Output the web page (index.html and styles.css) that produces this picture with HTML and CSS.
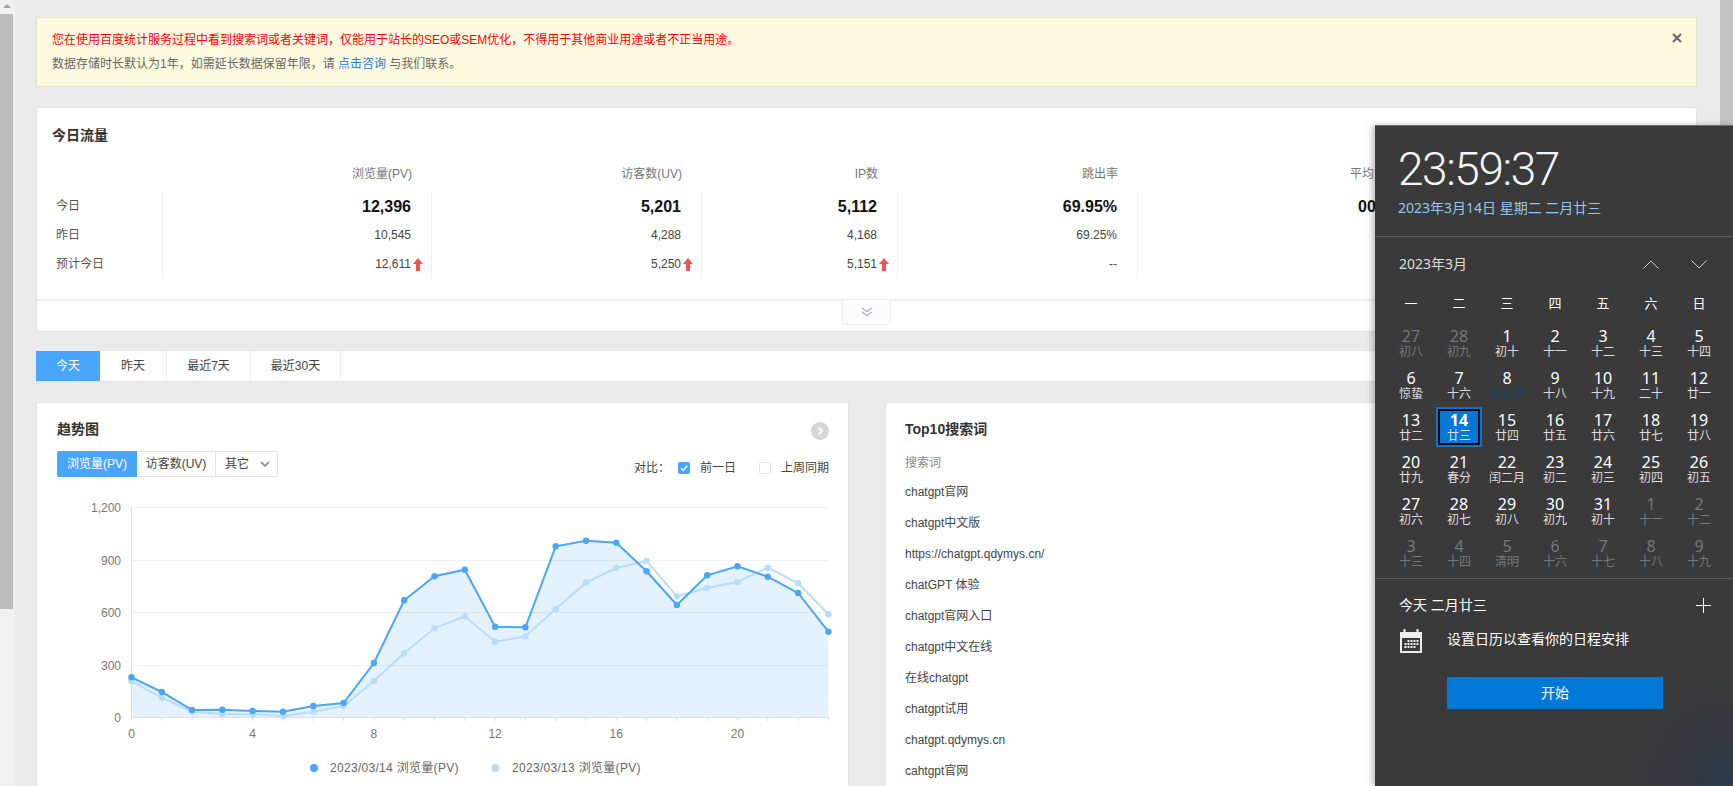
FILE: index.html
```html
<!DOCTYPE html>
<html lang="zh-CN">
<head>
<meta charset="utf-8">
<title>今日流量</title>
<link rel="stylesheet" href="styles.css">
</head>
<body>
<aside class="scroll-left">
  <div class="scroll-arrow"><span class="scroll-tri"></span></div>
  <div class="scroll-thumb"></div>
</aside>
<main class="main">
  <section class="banner">
    <div class="banner-text">
      <p class="warn">您在使用百度统计服务过程中看到搜索词或者关键词，仅能用于站长的SEO或SEM优化，不得用于其他商业用途或者不正当用途。</p>
      <p class="note">数据存储时长默认为1年，如需延长数据保留年限，请 <a class="link">点击咨询</a> 与我们联系。</p>
    </div>
    <svg class="close" viewBox="0 0 10 10"><path d="M1 1l8 8M9 1l-8 8"/></svg>
  </section>

  <section class="card today">
    <h2 class="today-title">今日流量</h2>
    <div class="kpi">
      <div></div><div class="kh">浏览量(PV)</div><div class="kh">访客数(UV)</div><div class="kh">IP数</div><div class="kh">跳出率</div><div class="kh cut">平均</div><div></div>
      <div class="kl">今日</div><div class="kv big sep">12,396</div><div class="kv big sep">5,201</div><div class="kv big sep">5,112</div><div class="kv big sep">69.95%</div><div class="kv big cut">00</div><div></div>
      <div class="kl">昨日</div><div class="kv sep">10,545</div><div class="kv sep">4,288</div><div class="kv sep">4,168</div><div class="kv sep">69.25%</div><div></div><div></div>
      <div class="kl">预计今日</div>
      <div class="kv sep">12,611<svg class="up" viewBox="0 0 10 13"><path d="M5 0l5 6H7v7H3V6H0z"/></svg></div>
      <div class="kv sep">5,250<svg class="up" viewBox="0 0 10 13"><path d="M5 0l5 6H7v7H3V6H0z"/></svg></div>
      <div class="kv sep">5,151<svg class="up" viewBox="0 0 10 13"><path d="M5 0l5 6H7v7H3V6H0z"/></svg></div>
      <div class="kv sep">--</div><div></div><div></div>
    </div>
    <div class="today-foot">
      <div class="expand"><svg viewBox="0 0 12 10"><path d="M1 1l5 3.5L11 1M1 5l5 3.5L11 5"/></svg></div>
    </div>
  </section>

  <nav class="tabs">
    <span class="tab tab-a active">今天</span>
    <span class="tab tab-b">昨天</span>
    <span class="tab tab-c">最近7天</span>
    <span class="tab tab-d">最近30天</span>
  </nav>

  <div class="panels">
    <section class="card trend">
      <div class="trend-head">
        <h2 class="panel-title">趋势图</h2>
        <svg class="more" viewBox="0 0 18 18"><circle cx="9" cy="9" r="9"/><path d="M7.5 5.5L11 9l-3.500 3.500"/></svg>
      </div>
      <div class="trend-tools">
        <div class="btns">
          <span class="btn btn-a active">浏览量(PV)</span>
          <span class="btn btn-b">访客数(UV)</span>
          <span class="btn btn-c">其它<svg class="caret" viewBox="0 0 10 6"><path d="M1 1l4 4 4-4"/></svg></span>
        </div>
        <div class="compare">
          <span class="cmp-label">对比：</span>
          <svg class="check" viewBox="0 0 12 12"><rect width="12" height="12" rx="2"/><path d="M3 6.200l2.200 2.200L9.200 3.800"/></svg>
          <span class="cmp-a">前一日</span>
          <span class="box"></span>
          <span class="cmp-b">上周同期</span>
        </div>
      </div>
      <svg class="chart" viewBox="0 0 811 290">
        <defs>
          <marker id="dotA" markerUnits="userSpaceOnUse" markerWidth="8" markerHeight="8" refX="4" refY="4"><circle cx="4" cy="4" r="3.200" fill="#4ba6f8"/></marker>
          <marker id="dotB" markerUnits="userSpaceOnUse" markerWidth="8" markerHeight="8" refX="4" refY="4"><circle cx="4" cy="4" r="3.200" fill="#b9dcfb"/></marker>
        </defs>
        <g transform="translate(-37 -496)">
          <path class="grid" d="M131.500 506.500H828.500M131.500 559.500H828.500M131.500 611.500H828.500M131.500 664.500H828.500"/>
          <path class="axis" d="M131.500 506V716M131.500 716.500H828.500M131.500 716v4M161.800 716v4M192.100 716v4M222.400 716v4M252.700 716v4M283 716v4M313.300 716v4M343.600 716v4M373.900 716v4M404.200 716v4M434.500 716v4M464.800 716v4M495.100 716v4M525.400 716v4M555.700 716v4M586 716v4M616.300 716v4M646.600 716v4M676.900 716v4M707.200 716v4M737.500 716v4M767.800 716v4M798.100 716v4M828.400 716v4"/>
          <polygon class="area" points="131.500,676.300 161.800,691 192.100,709 222.400,708.700 252.700,710 283,710.700 313.300,705 343.600,702 373.900,662 404.200,599.300 434.500,575.300 464.800,568.700 495.100,625.700 525.400,626.300 555.700,545.300 586,539.700 616.300,541.700 646.600,570.300 676.900,604 707.200,574.300 737.500,565.300 767.800,575.700 798.100,592 828.400,630.700 828.400,716 131.500,716"/>
          <polyline class="line-b" points="131.500,680.300 161.800,696.700 192.100,710.700 222.400,713 252.700,713.300 283,715 313.300,710.700 343.600,705 373.900,680 404.200,652.300 434.500,627 464.800,615.300 495.100,640.700 525.400,635.300 555.700,608 586,581.700 616.300,567 646.600,560 676.900,595.300 707.200,587 737.500,581 767.800,566.700 798.100,582.300 828.400,613.300"/>
          <polyline class="line-a" points="131.500,676.300 161.800,691 192.100,709 222.400,708.700 252.700,710 283,710.700 313.300,705 343.600,702 373.900,662 404.200,599.300 434.500,575.300 464.800,568.700 495.100,625.700 525.400,626.300 555.700,545.300 586,539.700 616.300,541.700 646.600,570.300 676.900,604 707.200,574.300 737.500,565.300 767.800,575.700 798.100,592 828.400,630.700"/>
          <g class="ylab">
            <text x="121" y="511">1,200</text><text x="121" y="564">900</text><text x="121" y="616">600</text><text x="121" y="669">300</text><text x="121" y="721">0</text>
          </g>
          <g class="xlab">
            <text x="131.500" y="737">0</text><text x="252.700" y="737">4</text><text x="373.900" y="737">8</text><text x="495.100" y="737">12</text><text x="616.300" y="737">16</text><text x="737.500" y="737">20</text>
          </g>
          <circle cx="314" cy="767" r="4" fill="#4ba6f8"/>
          <text class="leg" x="330" y="771">2023/03/14 浏览量(PV)</text>
          <circle cx="495.500" cy="767" r="4" fill="#b9dcfb"/>
          <text class="leg" x="512" y="771">2023/03/13 浏览量(PV)</text>
        </g>
      </svg>
    </section>

    <section class="card top10">
      <h2 class="panel-title">Top10搜索词</h2>
      <div class="top-head">搜索词</div>
      <ul class="top-list">
        <li>chatgpt官网</li>
        <li>chatgpt中文版</li>
        <li>https://chatgpt.qdymys.cn/</li>
        <li>chatGPT 体验</li>
        <li>chatgpt官网入口</li>
        <li>chatgpt中文在线</li>
        <li>在线chatgpt</li>
        <li>chatgpt试用</li>
        <li>chatgpt.qdymys.cn</li>
        <li>cahtgpt官网</li>
      </ul>
    </section>
  </div>
</main>
<aside class="scroll-right"></aside>

<section class="clock">
  <div class="clock-top">
    <div class="time">23:59:37</div>
    <div class="date">2023年3月14日 星期二 二月廿三</div>
  </div>
  <div class="cal">
    <div class="month-row">
      <span class="month">2023年3月</span>
      <span class="month-nav">
        <svg viewBox="0 0 16 9"><path d="M.5 8.500L8 1l7.500 7.500"/></svg>
        <svg viewBox="0 0 16 9"><path d="M.5.500L8 8l7.500-7.500"/></svg>
      </span>
    </div>
    <div class="week"><span>一</span><span>二</span><span>三</span><span>四</span><span>五</span><span>六</span><span>日</span></div>
    <div class="days">
      <div class="day dim"><b>27</b><i>初八</i></div><div class="day dim"><b>28</b><i>初九</i></div><div class="day"><b>1</b><i>初十</i></div><div class="day"><b>2</b><i>十一</i></div><div class="day"><b>3</b><i>十二</i></div><div class="day"><b>4</b><i>十三</i></div><div class="day"><b>5</b><i>十四</i></div>
      <div class="day"><b>6</b><i>惊蛰</i></div><div class="day"><b>7</b><i>十六</i></div><div class="day fest"><b>8</b><i>妇女节</i></div><div class="day"><b>9</b><i>十八</i></div><div class="day"><b>10</b><i>十九</i></div><div class="day"><b>11</b><i>二十</i></div><div class="day"><b>12</b><i>廿一</i></div>
      <div class="day"><b>13</b><i>廿二</i></div><div class="day sel"><b>14</b><i>廿三</i></div><div class="day"><b>15</b><i>廿四</i></div><div class="day"><b>16</b><i>廿五</i></div><div class="day"><b>17</b><i>廿六</i></div><div class="day"><b>18</b><i>廿七</i></div><div class="day"><b>19</b><i>廿八</i></div>
      <div class="day"><b>20</b><i>廿九</i></div><div class="day"><b>21</b><i>春分</i></div><div class="day"><b>22</b><i>闰二月</i></div><div class="day"><b>23</b><i>初二</i></div><div class="day"><b>24</b><i>初三</i></div><div class="day"><b>25</b><i>初四</i></div><div class="day"><b>26</b><i>初五</i></div>
      <div class="day"><b>27</b><i>初六</i></div><div class="day"><b>28</b><i>初七</i></div><div class="day"><b>29</b><i>初八</i></div><div class="day"><b>30</b><i>初九</i></div><div class="day"><b>31</b><i>初十</i></div><div class="day dim"><b>1</b><i>十一</i></div><div class="day dim"><b>2</b><i>十二</i></div>
      <div class="day dim"><b>3</b><i>十三</i></div><div class="day dim"><b>4</b><i>十四</i></div><div class="day dim"><b>5</b><i>清明</i></div><div class="day dim"><b>6</b><i>十六</i></div><div class="day dim"><b>7</b><i>十七</i></div><div class="day dim"><b>8</b><i>十八</i></div><div class="day dim"><b>9</b><i>十九</i></div>
    </div>
  </div>
  <div class="agenda">
    <div class="agenda-head">
      <span>今天 二月廿三</span>
      <svg class="plus" viewBox="0 0 15 15"><path d="M7.500 0v15M0 7.500h15"/></svg>
    </div>
    <div class="agenda-body">
      <svg class="cal-icon" viewBox="0 0 22 24">
        <path class="ci-o" d="M1 4.500h20v18.500H1z"/>
        <path class="ci-f" d="M0 3h3.500V0h2v3h11V0h2v3H22v6H0z"/>
        <path class="ci-f" d="M7.500 11h2v2h-2zM10.500 11h2v2h-2zM13.500 11h2v2h-2zM16.500 11h2v2h-2zM4.500 14h2v2h-2zM7.500 14h2v2h-2zM10.500 14h2v2h-2zM13.500 14h2v2h-2zM16.500 14h2v2h-2zM4.500 17h2v2h-2zM7.500 17h2v2h-2zM10.500 17h2v2h-2zM13.500 17h2v2h-2z"/>
      </svg>
      <div class="agenda-main">
        <div class="agenda-text">设置日历以查看你的日程安排</div>
        <div class="start">开始</div>
      </div>
    </div>
  </div>
</section>
</body>
</html>
```

FILE: styles.css
```css
* { box-sizing: border-box; }
html, body { margin: 0; padding: 0; }
body {
  width: 1733px;
  height: 786px;
  overflow: hidden;
  display: flex;
  background: #ebebeb;
  font: 12px/20px "Liberation Sans", "Noto Sans CJK SC", sans-serif;
  color: #333;
  position: relative;
}
p, h2, ul { margin: 0; padding: 0; }

.scroll-left { width: 15px; flex: none; background: #f1f1f1; }
.scroll-arrow { width: 13px; height: 14px; display: flex; justify-content: center; padding-top: 4px; }
.scroll-tri { width: 0; height: 0; border-left: 4px solid transparent; border-right: 4px solid transparent; border-bottom: 4px solid #a3a3a3; }
.scroll-thumb { width: 13px; height: 595px; background: #bcbcbc; }
.scroll-right { width: 13px; flex: none; background: #c3c3c3; }

.main { flex: 1; min-width: 0; padding: 17px 23px 0 21px; overflow: hidden; }

.banner { height: 70px; display: flex; justify-content: space-between; padding: 11px 14px 0 15px; background: #fffbe0; border: 1px solid #e8e2c4; border-radius: 2px; line-height: 23px; color: #666; }
.warn { color: #f00; }
.note { margin-top: 1px; }
.link { color: #1a7fdf; }
.close { width: 10px; height: 10px; margin-top: 4px; }
.close path { fill: none; stroke: #666; stroke-width: 2; }

.card { background: #fff; border: 1px solid #e3e3e3; border-radius: 2px; }
.today { height: 225px; margin-top: 20px; }
.today-title { font-size: 14px; font-weight: bold; line-height: 20px; margin: 17px 0 0 15px; color: #333; }
.kpi { display: grid; grid-template-columns: 126px 269px 270px 196px 240px 237px 1fr; grid-template-rows: 28px 29px 29px 29px; margin-top: 19px; height: 115px; }
.kh { text-align: right; padding-right: 20px; color: #777; line-height: 20px; }
.kl { padding-left: 19px; line-height: 29px; color: #555; }
.kv { text-align: right; padding-right: 20px; line-height: 29px; color: #444; }
.kv.big { font-size: 16px; font-weight: bold; color: #111; }
.kv.sep, .kl { border-right: 1px solid #f0f0f0; }
.kh.cut { text-align: left; padding: 0 0 0 212px; white-space: nowrap; overflow: hidden; }
.kv.cut { text-align: left; padding: 0 0 0 220px; white-space: nowrap; overflow: hidden; }
.up { width: 10px; height: 13px; margin-right: -12px; margin-left: 2px; vertical-align: -3px; fill: #f55353; }
.today-foot { margin-top: 20px; height: 32px; border-top: 2px solid #eee; display: flex; justify-content: center; }
.expand { width: 49px; height: 25px; margin-top: -1px; background: #fcfcfc; border: 1px solid #eee; border-top: 0; border-radius: 0 0 3px 3px; display: flex; align-items: center; justify-content: center; }
.expand svg { width: 12px; height: 10px; }
.expand path { fill: none; stroke: #aab0b8; stroke-width: 1.200; }

.tabs { height: 31px; margin-top: 19px; display: flex; background: #fff; border-bottom: 1px solid #e3e3e3; }
.tab { display: flex; align-items: center; justify-content: center; border-right: 1px solid #eee; color: #444; }
.tab-a { width: 64px; }
.tab-b { width: 67px; }
.tab-c { width: 84px; }
.tab-d { width: 90px; }
.tab.active { background: #4aa5fd; color: #fff; border-right: 0; }

.panels { display: flex; gap: 36px; margin-top: 20px; }
.trend { width: 813px; flex: none; height: 420px; padding: 16px 19px 0 20px; }
.top10 { flex: 1; min-width: 0; height: 420px; padding: 16px 19px 0; }
.trend-head { display: flex; justify-content: space-between; }
.panel-title { font-size: 14px; font-weight: bold; line-height: 20px; color: #333; }
.more { width: 18px; height: 18px; margin-top: 3px; }
.more circle { fill: #d5d5d5; }
.more path { fill: none; stroke: #fff; stroke-width: 2; }
.trend-tools { display: flex; justify-content: space-between; margin-top: 11px; height: 26px; }
.btns { display: flex; height: 26px; border: 1px solid #e3e3e3; border-radius: 2px; }
.btn { display: flex; align-items: center; justify-content: center; border-right: 1px solid #e3e3e3; color: #444; }
.btn-a { width: 80px; margin: -1px 0 -1px -1px; }
.btn-b { width: 79px; }
.btn-c { width: 61px; border-right: 0; gap: 11px; padding-left: 2px; }
.btn.active { background: #4aa5fd; color: #fff; border-right: 0; border-radius: 2px 0 0 2px; }
.caret { width: 10px; height: 6px; }
.caret path { fill: none; stroke: #999; stroke-width: 1.800; }
.compare { display: flex; align-items: center; align-self: flex-end; height: 18px; color: #444; }
.cmp-label { width: 44px; }
.check { width: 12px; height: 12px; }
.check rect { fill: #4aa5fd; }
.check path { fill: none; stroke: #fff; stroke-width: 1.500; }
.cmp-a { width: 59px; margin-left: 10px; }
.box { width: 12px; height: 12px; border: 1px solid #e3e3e3; border-radius: 2px; }
.cmp-b { margin-left: 10px; }

.chart { display: block; width: 811px; height: 290px; margin: 20px -19px 0 -20px; overflow: hidden; }
.grid { fill: none; stroke: #eef0f3; stroke-width: 1; }
.axis { fill: none; stroke: #dcdfe3; stroke-width: 1; }
.area { fill: #4ba6f8; fill-opacity: .15; }
.line-a, .line-b { fill: none; stroke-width: 2; }
.line-a { stroke: #4ba6f8; marker-start: url(#dotA); marker-mid: url(#dotA); marker-end: url(#dotA); }
.line-b { stroke: #b9dcfb; marker-start: url(#dotB); marker-mid: url(#dotB); marker-end: url(#dotB); }
.ylab text { text-anchor: end; fill: #777; font-size: 12px; }
.xlab text { text-anchor: middle; fill: #777; font-size: 12px; }
.leg { fill: #666; font-size: 12px; letter-spacing: .3px; }

.top-head { margin-top: 14px; color: #888; }
.top-list { list-style: none; margin-top: 4px; }
.top-list li { height: 31px; line-height: 31px; color: #444; }

.clock {
  position: absolute;
  left: 1375px;
  top: 125px;
  width: 358px;
  height: 661px;
  background: radial-gradient(circle at 100% 100%, #2a3b4c 0, #33393f 50px, #3a3a3a 110px), #3a3a3a;
  border-top: 1px solid #6e6e6e;
  box-shadow: -3px 0 6px rgba(0,0,0,.25);
  color: #fff;
  font-family: "Noto Sans", "Noto Sans CJK SC", sans-serif;
}
.clock-top { height: 111px; padding: 15px 0 0 23px; border-bottom: 1px solid #5f5f5f; }
.time { font: 280 46px/56px Roboto, "Noto Sans", sans-serif; letter-spacing: -1.450px; color: #f5f5f5; }
.date { margin-top: 1px; font-size: 14px; line-height: 20px; color: #93c7f0; }
.cal { height: 342px; padding-top: 17px; border-bottom: 1px solid #5f5f5f; }
.month-row { display: flex; justify-content: space-between; align-items: center; height: 20px; padding: 0 26px 0 24px; }
.month { font-size: 14px; color: #ddd; }
.month-nav { display: flex; gap: 32px; }
.month-nav svg { width: 16px; height: 9px; }
.month-nav path { fill: none; stroke: #ccc; stroke-width: 1; }
.week { display: grid; grid-template-columns: repeat(7, 48px); margin-top: 19px; padding-left: 12px; height: 20px; line-height: 20px; text-align: center; font-size: 13px; }
.days { display: grid; grid-template-columns: repeat(7, 48px); grid-auto-rows: 42px; margin-top: 9px; padding-left: 12px; }
.day { display: flex; flex-direction: column; align-items: center; padding-top: 6px; }
.day b { font-weight: 400; font-size: 16px; line-height: 16px; }
.day i { font-style: normal; font-size: 12px; line-height: 12px; color: #ddd; margin-top: 2px; }
.dim b, .dim i { color: #777; }
.fest i { color: #1d4263; }
.sel { margin: 1px; padding-top: 3px; background: #0078d7; border: 2px solid #0078d7; box-shadow: inset 0 0 0 2px #000; }
.sel b { font-weight: 700; }
.agenda { padding: 16px 22px 0 24px; }
.agenda-head { display: flex; justify-content: space-between; align-items: center; height: 20px; font-size: 14px; }
.plus { width: 15px; height: 15px; }
.plus path { stroke: #fff; stroke-width: 1; fill: none; }
.agenda-body { display: flex; margin-top: 14px; }
.cal-icon { width: 22px; height: 24px; flex: none; margin-left: 1px; }
.ci-o { fill: none; stroke: #eee; stroke-width: 2; }
.ci-f { fill: #eee; }
.agenda-main { margin-left: 25px; }
.agenda-text { font-size: 14px; line-height: 20px; }
.start { width: 216px; height: 32px; margin-top: 28px; background: #0078d7; text-align: center; font-size: 14px; line-height: 32px; }
```
